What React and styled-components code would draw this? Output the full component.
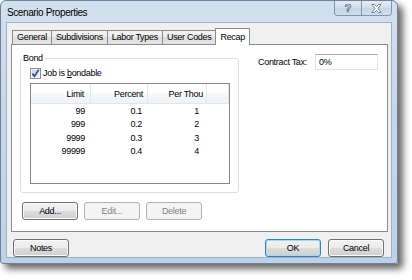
import React from "react";
import styled, { createGlobalStyle } from "styled-components";

const GlobalStyle = createGlobalStyle`
  html, body { margin: 0; padding: 0; background: #fff; }
  body {
    font-family: "Liberation Sans", Arial, sans-serif;
    font-size: 9px;
    letter-spacing: -0.3px;
    color: #000;
  }
`

const Stage = styled.div`
  width: 412px;
  height: 280px;
  overflow: hidden;
`

const Window = styled.div`
  width: 398px;
  height: 264px;
  box-sizing: border-box;
  border: 1px solid #6f819a;
  border-radius: 6px 6px 3px 3px;
  background: linear-gradient(#d3e0ee, #c6d7ea 40%, #bdd2e9);
  box-shadow: 5px 5px 7px rgba(0, 0, 0, 0.6);
  display: flex;
  flex-direction: column;
`

const TitleBar = styled.div`
  height: 21px;
  display: flex;
  justify-content: space-between;
  align-items: flex-start;
`

const Title = styled.div`
  font-size: 10px;
  letter-spacing: -0.4px;
  padding: 6px 0 0 6px;
`

const CaptionButtons = styled.div`
  display: flex;
  margin-right: 5px;
  border: 1px solid #8295ad;
  border-top: none;
  border-radius: 0 0 4px 4px;
  overflow: hidden;
`

const CaptionButton = styled.div`
  width: ${props => props.w}px;
  height: 14px;
  display: flex;
  align-items: center;
  justify-content: center;
  background: linear-gradient(#e3ebf5, #d2deec 50%, #c5d5e8 50%, #cfdcec);
  border-left: ${props => (props.first ? "none" : "1px solid #8295ad")};
  font-weight: bold;
  font-size: 11px;
  letter-spacing: 0;
  color: #fff;
  -webkit-text-stroke: 0.7px #5b6675;
`

const Client = styled.div`
  flex: 1;
  margin: 0 5px 5px;
  background: #f0f0f0;
  border: 1px solid #9fb1c7;
  display: flex;
  flex-direction: column;
  padding: 5px 3px 0 4px;
`

const TabStrip = styled.div`
  display: flex;
  align-items: flex-end;
  height: 16px;
  padding-left: 1px;
`

const Tab = styled.div`
  box-sizing: border-box;
  height: ${props => (props.active ? 17 : 14)}px;
  padding: ${props => (props.active ? "3px 4px 0" : "1px 4px 0")};
  border: 1px solid #898c95;
  border-bottom: none;
  margin-right: -1px;
  margin-bottom: ${props => (props.active ? -1 : 0)}px;
  background: ${props => (props.active ? "#fff" : "linear-gradient(#f3f3f3, #ebebeb 50%, #dddddd 50%, #e5e5e5)")};
  position: relative;
  z-index: ${props => (props.active ? 1 : 0)};
  white-space: nowrap;
`

const Panel = styled.div`
  width: 377px;
  height: 188px;
  box-sizing: border-box;
  border: 1px solid #898c95;
  background: #fff;
  display: flex;
  padding: 7px 0 0 8px;
`

const LeftColumn = styled.div`
  display: flex;
  flex-direction: column;
`

const GroupBox = styled.fieldset`
  width: 219px;
  box-sizing: border-box;
  margin: 0;
  padding: 3px 8px 8px 9px;
  border: 1px solid #d5dfe5;
  border-radius: 3px;
`

const Legend = styled.legend`
  padding: 0 1px;
  margin-left: -8px;
  line-height: 12px;
`

const CheckRow = styled.label`
  display: flex;
  align-items: center;
  gap: 2px;
  height: 12px;
  margin-bottom: 4px;
`

const ListView = styled.div`
  width: 200px;
  height: 101px;
  box-sizing: border-box;
  border: 1px solid #828790;
  background: #fff;
`

const ListGrid = styled.div`
  display: grid;
  grid-template-columns: 60px 57px 59px 1fr;
`

const HeaderCell = styled.div`
  height: 20px;
  box-sizing: border-box;
  display: flex;
  align-items: center;
  justify-content: flex-end;
  padding-right: ${props => props.pad}px;
  background: linear-gradient(#ffffff, #ffffff 50%, #f7f8fa 50%, #f1f2f4);
  border-right: 1px solid #e3e5e8;
  border-bottom: 1px solid #e3e5e8;
`

const Cell = styled.div`
  height: 13.5px;
  display: flex;
  align-items: center;
  justify-content: flex-end;
  padding-right: ${props => props.pad}px;
`

const ButtonRow = styled.div`
  display: flex;
  gap: 6px;
  margin: 9px 0 0 2px;
`

const Button = styled.button`
  width: ${props => props.w || 56}px;
  height: 18px;
  box-sizing: border-box;
  padding: 0;
  font: inherit;
  letter-spacing: inherit;
  border-radius: 3px;
  border: 1px solid ${props => (props.disabled ? "#adb2b5" : props.primary ? "#3c7fb1" : "#707070")};
  color: ${props => (props.disabled ? "#838383" : "#000")};
  background: ${props => (props.disabled ? "#f4f4f4" : "linear-gradient(#f2f2f2, #ebebeb 50%, #dddddd 50%, #cfcfcf)")};
  box-shadow: inset 0 0 0 1px ${props => (props.disabled ? "#f4f4f4" : props.primary ? "#a6d8f4" : "#fbfbfb")};
`

const RightColumn = styled.div`
  display: flex;
  align-items: center;
  gap: 8px;
  align-self: flex-start;
  margin: 2px 0 0 19px;
  white-space: nowrap;
`

const TextBox = styled.div`
  width: 63px;
  height: 16px;
  box-sizing: border-box;
  border: 1px solid #e2e3ea;
  border-top-color: #abadb3;
  padding: 2px 0 0 3px;
  background: #fff;
`

const Footer = styled.div`
  display: flex;
  align-items: center;
  margin-top: 7px;
  padding: 0 4px 0 2px;
`

const Spacer = styled.div`
  flex: 1;
`

const FooterButtons = styled.div`
  display: flex;
  gap: 7px;
`

const CheckIcon = () => (
  <svg width="11" height="11" viewBox="0 0 11 11">
    <defs>
      <linearGradient id="cb" x1="0" y1="0" x2="1" y2="1">
        <stop offset="0" stopColor="#cbd3df" />
        <stop offset="1" stopColor="#f2f5fa" />
      </linearGradient>
    </defs>
    <rect x="0.5" y="0.5" width="10" height="10" fill="#f4f4f4" stroke="#8e8f8f" />
    <rect x="2" y="2" width="7" height="7" fill="url(#cb)" />
    <path d="M2.4 5.6 L4.5 8.2 L8.8 1.6" fill="none" stroke="#2f4f95" strokeWidth="1.7" />
  </svg>
)

const CloseGlyph = () => (
  <svg width="11" height="9" viewBox="0 0 11 9">
    <path
      d="M1 0.5 H3.5 L5.5 2.7 L7.5 0.5 H10 L6.9 4.5 L10 8.5 H7.5 L5.5 6.3 L3.5 8.5 H1 L4.1 4.5 Z"
      fill="#fff"
      stroke="#5b6675"
      strokeWidth="0.8"
    />
  </svg>
)

const rows = [
  ["99", "0.1", "1"],
  ["999", "0.2", "2"],
  ["9999", "0.3", "3"],
  ["99999", "0.4", "4"],
]

const tabs = ["General", "Subdivisions", "Labor Types", "User Codes", "Recap"]

export default function App() {
  return (
    <Stage>
      <GlobalStyle />
      <Window>
        <TitleBar>
          <Title>Scenario Properties</Title>
          <CaptionButtons>
            <CaptionButton w={26} first>?</CaptionButton>
            <CaptionButton w={29}><CloseGlyph /></CaptionButton>
          </CaptionButtons>
        </TitleBar>
        <Client>
          <TabStrip>
            {tabs.map(t => (
              <Tab key={t} active={t === "Recap"}>{t}</Tab>
            ))}
          </TabStrip>
          <Panel>
            <LeftColumn>
              <GroupBox>
                <Legend>Bond</Legend>
                <CheckRow>
                  <CheckIcon />
                  <span>Job is <u>b</u>ondable</span>
                </CheckRow>
                <ListView>
                  <ListGrid>
                    <HeaderCell pad={6}>Limit</HeaderCell>
                    <HeaderCell pad={4}>Percent</HeaderCell>
                    <HeaderCell pad={3}>Per Thou</HeaderCell>
                    <HeaderCell pad={0} />
                    {rows.map(r => (
                      <React.Fragment key={r[0]}>
                        <Cell pad={6}>{r[0]}</Cell>
                        <Cell pad={6}>{r[1]}</Cell>
                        <Cell pad={8}>{r[2]}</Cell>
                        <Cell pad={0} />
                      </React.Fragment>
                    ))}
                  </ListGrid>
                </ListView>
              </GroupBox>
              <ButtonRow>
                <Button>Add...</Button>
                <Button disabled>Edit...</Button>
                <Button disabled>Delete</Button>
              </ButtonRow>
            </LeftColumn>
            <RightColumn>
              <span>Contract Tax:</span>
              <TextBox>0%</TextBox>
            </RightColumn>
          </Panel>
          <Footer>
            <Button>Notes</Button>
            <Spacer />
            <FooterButtons>
              <Button primary>OK</Button>
              <Button>Cancel</Button>
            </FooterButtons>
          </Footer>
        </Client>
      </Window>
    </Stage>
  );
}
